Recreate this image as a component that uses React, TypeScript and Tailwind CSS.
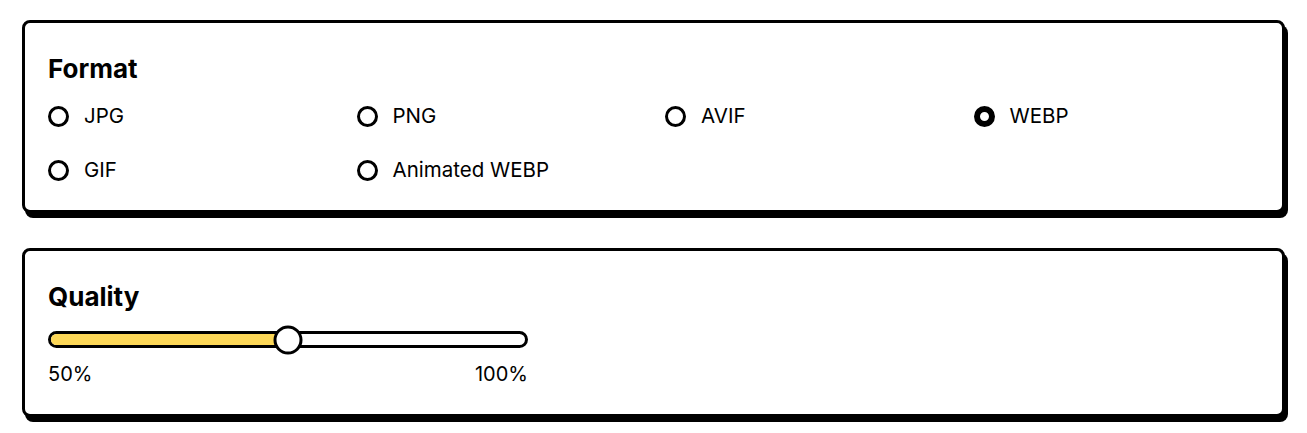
import { useState } from "react";

const formats = ["JPG", "PNG", "AVIF", "WEBP", "GIF", "Animated WEBP"];

function Card({ title, bottom, children }: { title: string; bottom: string; children: React.ReactNode }) {
  return (
    <section className={`rounded-lg border-[3px] border-black bg-white px-[23px] pt-[31px] shadow-[3px_5px_0_0_#000] ${bottom}`}>
      <h2 className="text-[26px] font-bold leading-[30px] text-black">{title}</h2>
      {children}
    </section>
  );
}

function Radio({ label, checked, onSelect }: { label: string; checked: boolean; onSelect: () => void }) {
  return (
    <label className="flex h-[32px] cursor-pointer items-center gap-[15px]" onClick={onSelect}>
      <span
        className={
          checked
            ? "h-[21px] w-[21px] rounded-full border-[6px] border-black bg-white"
            : "h-[21px] w-[21px] rounded-full border-[3px] border-black bg-white"
        }
      />
      <span className="text-[20.5px] text-black">{label}</span>
    </label>
  );
}

export default function App() {
  const [format, setFormat] = useState("WEBP");
  const quality = 50;

  return (
    <div className="flex flex-col gap-[35px] bg-white px-[22px] pt-[20px] pb-[16px]" style={{ fontFamily: "Inter, 'Noto Sans', sans-serif" }}>
      <Card title="Format" bottom="pb-[24px]">
        <div className="mt-[16px] grid grid-cols-4 gap-x-[23px] gap-y-[22px]">
          {formats.map((f) => (
            <Radio key={f} label={f} checked={f === format} onSelect={() => setFormat(f)} />
          ))}
        </div>
      </Card>

      <Card title="Quality" bottom="pb-[28px]">
        <div className="mt-[19px] w-[480px]">
          <div className="relative h-[17px] rounded-full border-[3px] border-black bg-white">
            <div className="h-full rounded-full bg-[#fcd757]" style={{ width: `${quality}%` }} />
            <div
              className="absolute top-1/2 h-[29px] w-[29px] -translate-x-1/2 -translate-y-1/2 rounded-full border-[3px] border-black bg-white"
              style={{ left: `${quality}%` }}
            />
          </div>
          <div className="mt-[14px] flex justify-between text-[20px] leading-[24px] text-black">
            <span>50%</span>
            <span>100%</span>
          </div>
        </div>
      </Card>
    </div>
  );
}
